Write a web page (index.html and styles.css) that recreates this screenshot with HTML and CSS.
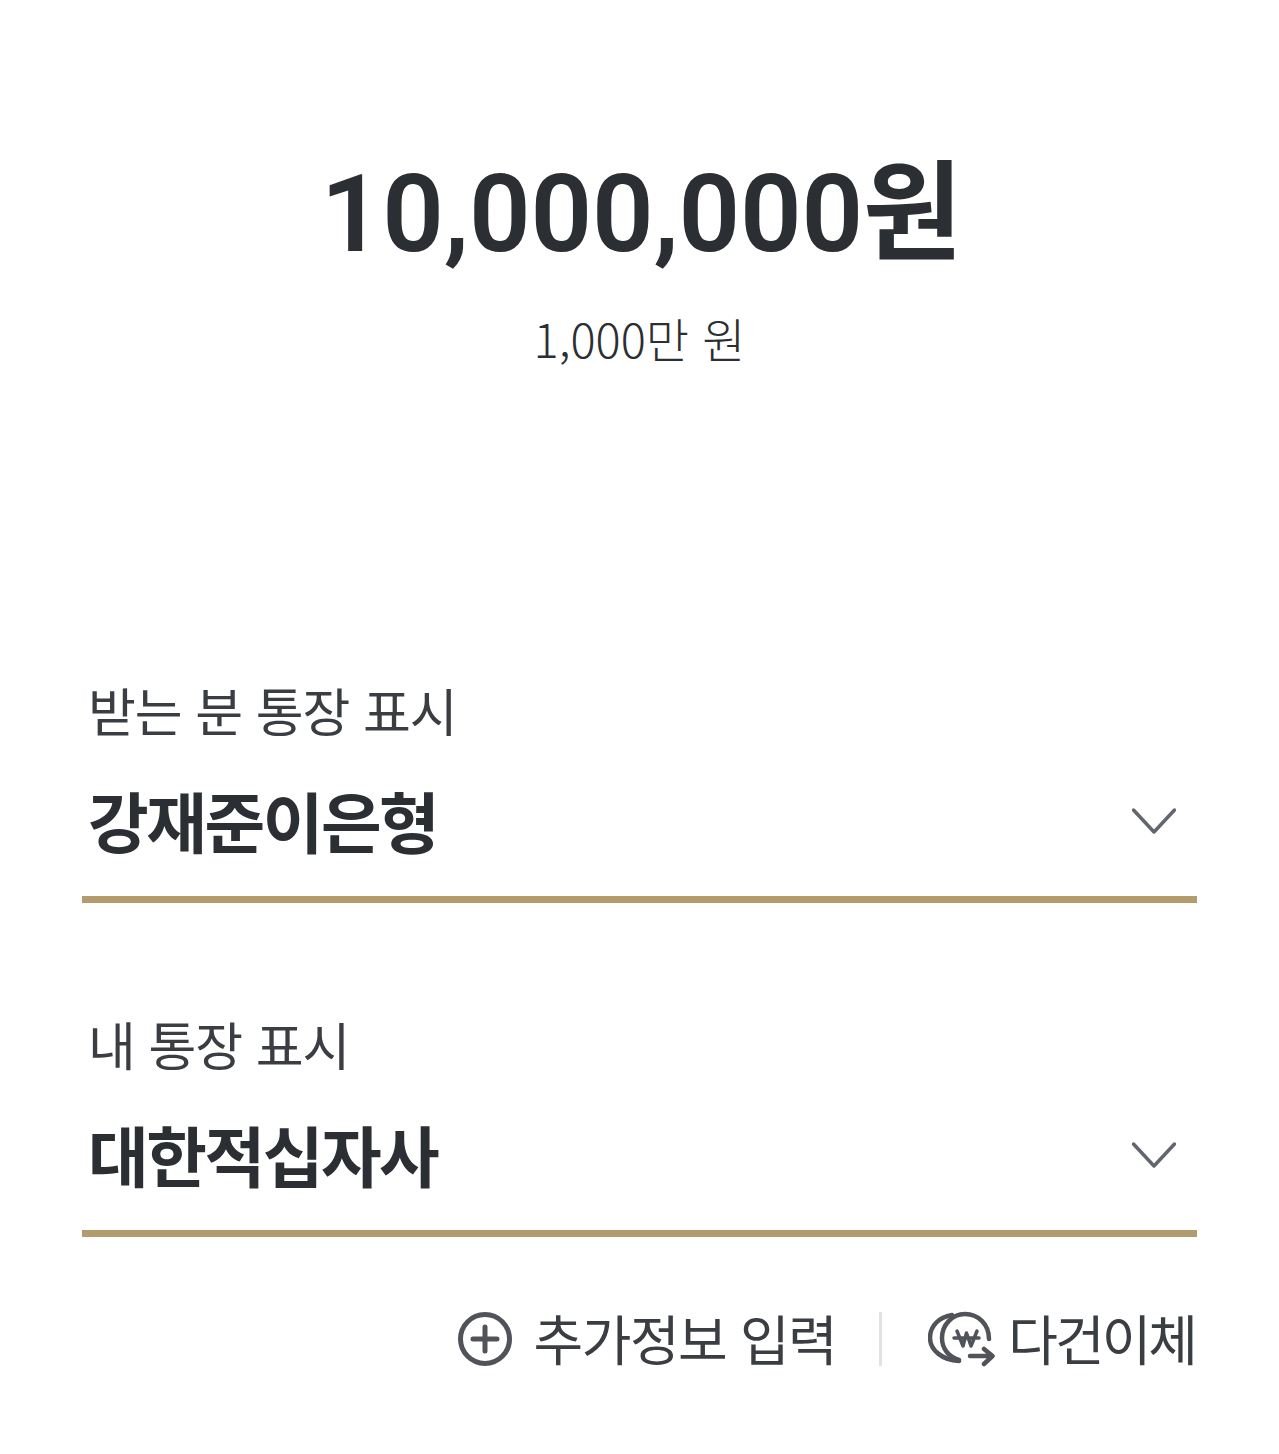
FILE: index.html
```html
<!DOCTYPE html>
<html lang="ko">
<head>
    <title>이체 확인</title>
    <link rel="stylesheet" href="styles.css">
</head>
<body>
    <div class="transfer">
        <div class="amount-section">
            <div class="amount">10,000,000원</div>
            <div class="amount-korean">1,000만 원</div>
        </div>

        <div class="field first">
            <label>받는 분 통장 표시</label>
            <div class="select-row">
                <span class="value">강재준이은형</span>
                <svg class="chevron" viewBox="0 0 44 28"><path d="M1.5 2 L22 24 L42.5 2"/></svg>
            </div>
        </div>

        <div class="field">
            <label>내 통장 표시</label>
            <div class="select-row">
                <span class="value">대한적십자사</span>
                <svg class="chevron" viewBox="0 0 44 28"><path d="M1.5 2 L22 24 L42.5 2"/></svg>
            </div>
        </div>

        <div class="actions">
            <div class="action">
                <svg class="icon-plus" viewBox="0 0 54 54">
                    <circle cx="27" cy="27" r="24.5"/>
                    <path d="M15 27 H39 M27 15 V39"/>
                </svg>
                <span>추가정보 입력</span>
            </div>
            <div class="divider"></div>
            <div class="action multi">
                <svg class="icon-multi" viewBox="0 0 67 56">
                    <path d="M61 28 C61 13 50 3 37 3 C24 3 14 14 14 27 C14 38 21 46 31 49"/>
                    <path d="M24 4 C11 6 2 15 2 27 C2 39 14 49 31 50"/>
                    <path d="M26 27 H51 M29 20 L35 35 L38.5 22 L43 35 L49 20" class="thin"/>
                    <path d="M42 45 H64 M56 38 L64.5 45 L56 53"/>
                </svg>
                <span>다건이체</span>
            </div>
        </div>
    </div>
</body>
</html>
```

FILE: styles.css
```css
html, body {
    margin: 0;
    padding: 0;
    background: #fff;
}
body {
    font-family: Roboto, "Noto Sans CJK KR", sans-serif;
    color: #2b2e33;
}
.transfer {
    height: 1454px;
    box-sizing: border-box;
    padding: 0 82px;
}
.amount-section {
    padding-top: 158px;
    height: 522px;
    box-sizing: border-box;
    text-align: center;
}
.amount {
    padding-left: 4px;
    font-size: 108px;
    line-height: 112px;
    font-weight: 600;
    letter-spacing: -0.2px;
}
.amount-korean {
    margin-top: 38px;
    font-family: "Noto Sans CJK KR", sans-serif;
    font-size: 47px;
    line-height: 60px;
    font-weight: 300;
}
.field {
    height: 334px;
    box-sizing: border-box;
}
.field.first {
    margin-top: 153px;
}
.field label {
    display: block;
    padding: 0 6px;
    font-family: "Noto Sans CJK KR", sans-serif;
    font-size: 52px;
    line-height: 70px;
    font-weight: 400;
    letter-spacing: -1px;
    color: #3a3d42;
}
.select-row {
    display: flex;
    align-items: center;
    justify-content: space-between;
    height: 158px;
    padding: 0 21px 3px 6px;
    border-bottom: 7px solid #b29b6c;
    box-sizing: border-box;
}
.value {
    font-family: "Noto Sans CJK KR", sans-serif;
    font-size: 66px;
    font-weight: 700;
    letter-spacing: -2.5px;
}
.chevron {
    width: 44px;
    height: 28px;
    margin-top: 6px;
    fill: none;
    stroke: #62666e;
    stroke-width: 3.5;
    stroke-linecap: round;
    stroke-linejoin: round;
}
.actions {
    display: flex;
    align-items: center;
    justify-content: flex-end;
    height: 56px;
    margin-top: -32px;
    padding-right: 2px;
}
.action {
    display: flex;
    align-items: center;
    gap: 22px;
    font-family: "Noto Sans CJK KR", sans-serif;
    font-size: 54px;
    font-weight: 400;
    letter-spacing: -1.5px;
    color: #3a3d42;
}
.action span {
    margin-top: -4px;
}
.action.multi {
    gap: 13px;
    letter-spacing: -3px;
}
.divider {
    width: 3px;
    height: 54px;
    margin: 0 46px 0 43px;
    background: #e2e2e2;
}
.icon-plus {
    width: 54px;
    height: 54px;
    fill: none;
    stroke: #50535a;
    stroke-width: 5;
    stroke-linecap: round;
}
.icon-multi {
    width: 67px;
    height: 56px;
    fill: none;
    stroke: #50535a;
    stroke-width: 4.5;
    stroke-linecap: round;
    stroke-linejoin: round;
}
.icon-multi .thin {
    stroke-width: 3.5;
}
```
